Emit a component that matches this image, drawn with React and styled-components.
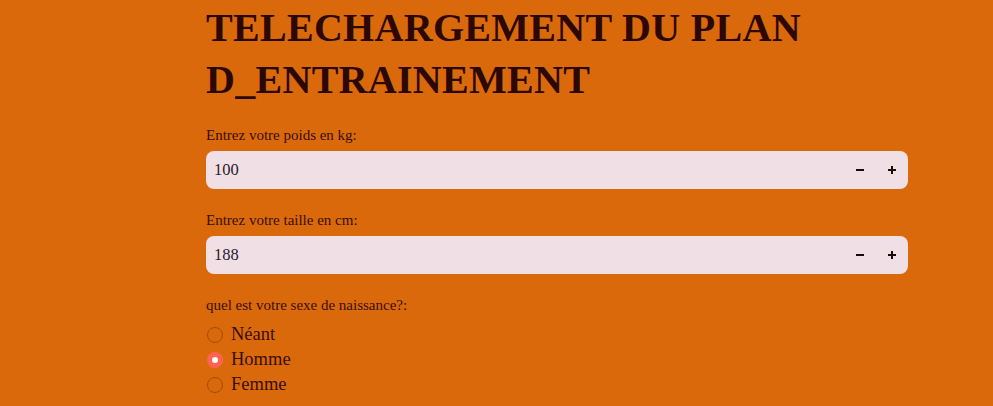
import React, { useState } from "react";
import styled, { createGlobalStyle } from "styled-components";

const GlobalStyle = createGlobalStyle`
  html, body {
    margin: 0;
    padding: 0;
    background-color: #d9690b;
    overflow: hidden;
  }
  body {
    font-family: "Liberation Serif", "DejaVu Serif", serif;
    color: #31100a;
  }
`;

const Page = styled.div`
  width: 993px;
  height: 406px;
  background-color: #d9690b;
  overflow: hidden;
`;

const Main = styled.div`
  width: 702px;
  margin-left: 206px;
  padding-top: 2px;
  display: flex;
  flex-direction: column;
`;

const Title = styled.h1`
  margin: 0 0 19px 0;
  font-family: "Liberation Serif", serif;
  font-weight: 700;
  font-size: 40px;
  line-height: 52px;
  letter-spacing: 0.3px;
  color: #2c0805;
`;

const Field = styled.div`
  display: flex;
  flex-direction: column;
  margin-bottom: 21px;
`;

const Label = styled.label`
  font-size: 15px;
  line-height: 20px;
  color: #3a0e06;
  margin-bottom: 6px;
`;

const InputRow = styled.div`
  display: flex;
  align-items: center;
  height: 38px;
  background-color: #f0dfe4;
  border-radius: 8px;
  overflow: hidden;
`;

const NumberInput = styled.input`
  flex: 1;
  min-width: 0;
  height: 100%;
  border: none;
  outline: none;
  background: transparent;
  padding: 0 8px;
  font-family: "Liberation Serif", serif;
  font-size: 16.5px;
  color: #2a1a2c;
`;

const StepButton = styled.button`
  width: 32px;
  height: 100%;
  border: none;
  background: transparent;
  display: flex;
  align-items: center;
  justify-content: center;
  cursor: pointer;
  padding: 0;
  color: #1c0a0a;
`;

const RadioGroup = styled.div`
  display: flex;
  flex-direction: column;
  margin-top: 1px;
`;

const RadioRow = styled.label`
  display: flex;
  align-items: center;
  height: 25px;
  cursor: pointer;
  font-size: 18.5px;
  color: #3a0e06;
`;

const RadioDot = styled.span`
  box-sizing: border-box;
  width: 16px;
  height: 16px;
  border-radius: 50%;
  margin-left: 1px;
  margin-right: 8px;
  border: ${(p) => (p.checked ? "none" : "1px solid #a44c06")};
  background-color: ${(p) => (p.checked ? "#ff6352" : "transparent")};
  display: flex;
  align-items: center;
  justify-content: center;

  &::after {
    content: "";
    display: ${(p) => (p.checked ? "block" : "none")};
    width: 6px;
    height: 6px;
    border-radius: 50%;
    background-color: #ffffff;
  }
`;

const Minus = () => (
  <svg width="10" height="10" viewBox="0 0 10 10">
    <rect x="1" y="4" width="8" height="2" fill="currentColor" />
  </svg>
);

const Plus = () => (
  <svg width="10" height="10" viewBox="0 0 10 10">
    <rect x="1" y="4" width="8" height="2" fill="currentColor" />
    <rect x="4" y="1" width="2" height="8" fill="currentColor" />
  </svg>
);

const NumberField = ({ label, value, onChange }) => (
  <Field>
    <Label>{label}</Label>
    <InputRow>
      <NumberInput value={value} onChange={(e) => onChange(e.target.value)} />
      <StepButton onClick={() => onChange(Number(value) - 1)}>
        <Minus />
      </StepButton>
      <StepButton onClick={() => onChange(Number(value) + 1)}>
        <Plus />
      </StepButton>
    </InputRow>
  </Field>
);

const App = () => {
  const [poids, setPoids] = useState(100);
  const [taille, setTaille] = useState(188);
  const [sexe, setSexe] = useState("Homme");
  const options = ["Néant", "Homme", "Femme"];

  return (
    <Page>
      <GlobalStyle />
      <Main>
        <Title>
          TELECHARGEMENT DU PLAN
          <br />
          D_ENTRAINEMENT
        </Title>
        <NumberField label="Entrez votre poids en kg:" value={poids} onChange={setPoids} />
        <NumberField label="Entrez votre taille en cm:" value={taille} onChange={setTaille} />
        <Label>quel est votre sexe de naissance?:</Label>
        <RadioGroup>
          {options.map((op) => (
            <RadioRow key={op} onClick={() => setSexe(op)}>
              <RadioDot checked={sexe === op} />
              {op}
            </RadioRow>
          ))}
        </RadioGroup>
      </Main>
    </Page>
  );
};

export default App;
